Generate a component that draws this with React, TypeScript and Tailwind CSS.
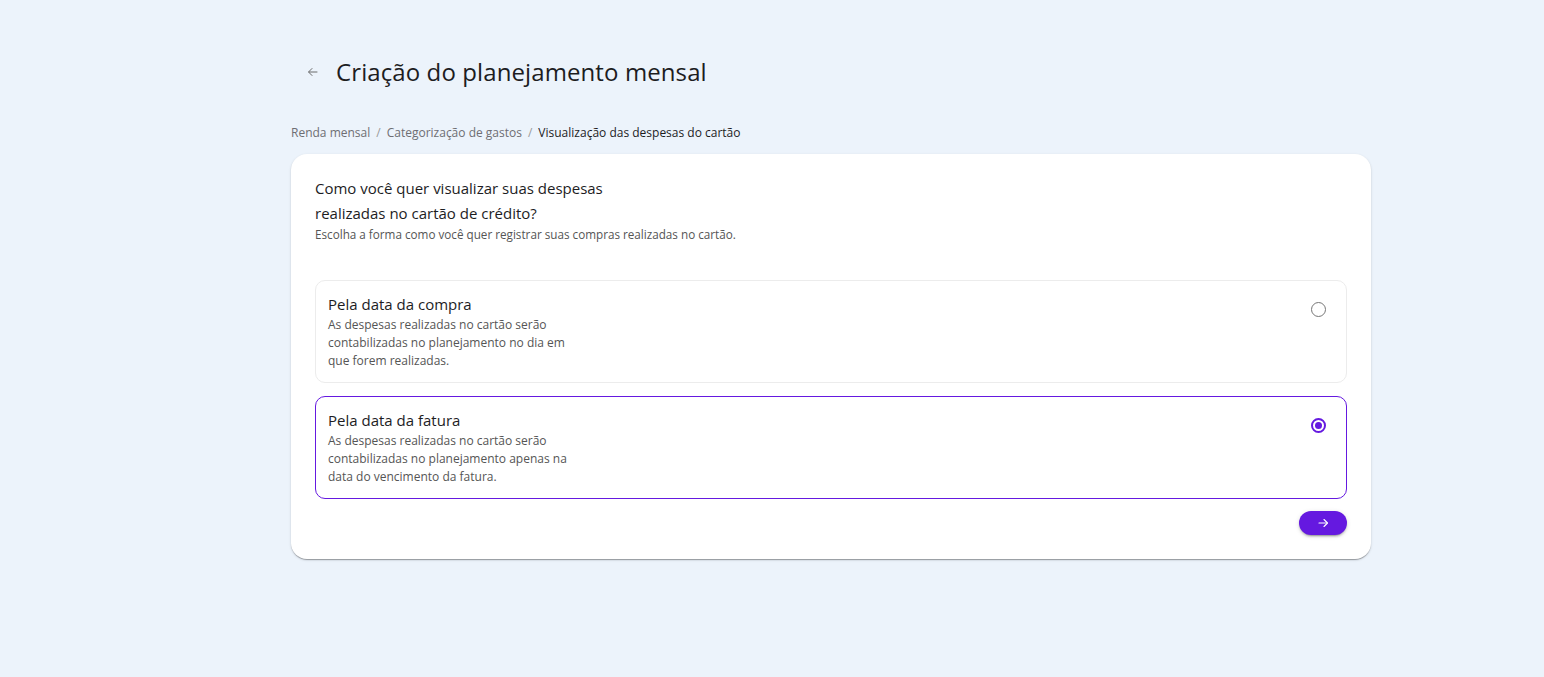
import React, { useState } from "react";

const opcoes = [
    {
        id: "compra",
        titulo: "Pela data da compra",
        descricao: "As despesas realizadas no cartão serão contabilizadas no planejamento no dia em que forem realizadas.",
    },
    {
        id: "fatura",
        titulo: "Pela data da fatura",
        descricao: "As despesas realizadas no cartão serão contabilizadas no planejamento apenas na data do vencimento da fatura.",
    },
];

const Radio = ({ checked }: { checked: boolean }) => (
    <span
        className={
            checked
                ? "shrink-0 w-[15px] h-[15px] rounded-full border-2 border-[#6519e0] flex items-center justify-center"
                : "block shrink-0 w-[15px] h-[15px] rounded-full border-[1.5px] border-[#767676]"
        }>
        {checked && <span className="block w-[7px] h-[7px] rounded-full bg-[#6519e0]"></span>}
    </span>
);

export default function App() {
    const [selecionado, setSelecionado] = useState("fatura");

    return (
        <div
            className="min-h-[677px] w-full bg-[#ecf3fb] text-[#1d1d1f]"
            style={{ fontFamily: '"Open Sans", "Noto Sans", sans-serif' }}>
            <main className="pl-[291px] pt-[56px] w-[1371px]">
                <header className="flex items-center h-[32px]">
                    <button className="w-[45px] flex items-center pl-[16px] text-[#6b6b6b]">
                        <svg width="12" height="12" viewBox="0 0 24 24" fill="none" stroke="currentColor" strokeWidth="2" strokeLinecap="round" strokeLinejoin="round">
                            <path d="M20 12H4" />
                            <path d="M10 5l-7 7 7 7" />
                        </svg>
                    </button>
                    <h1 className="text-[24px] tracking-[0.1px] leading-[32px]">Criação do planejamento mensal</h1>
                </header>

                <nav className="mt-[37px] flex items-center gap-[6px] text-[12px] leading-[16px] text-[#6e6e73]">
                    <span>Renda mensal</span>
                    <span className="text-[#9a9a9a]">/</span>
                    <span>Categorização de gastos</span>
                    <span className="text-[#9a9a9a]">/</span>
                    <span className="text-[#1d1d1f]">Visualização das despesas do cartão</span>
                </nav>

                <section className="mt-[13px] bg-white rounded-[16px] shadow-[0_2px_1px_-1px_rgba(0,0,0,0.2),0_1px_1px_0_rgba(0,0,0,0.14),0_1px_3px_0_rgba(0,0,0,0.12)] px-[24px] pt-[22px] pb-[24px]">
                    <h2 className="text-[15px] leading-[25px] w-[300px]">
                        Como você quer visualizar suas despesas realizadas no cartão de crédito?
                    </h2>
                    <p className="text-[11.7px] leading-[16px] text-[#555]">
                        Escolha a forma como você quer registrar suas compras realizadas no cartão.
                    </p>

                    <div className="mt-[38px] flex flex-col gap-[13px]">
                        {opcoes.map((opcao) => {
                            const ativo = selecionado === opcao.id;
                            return (
                                <label
                                    key={opcao.id}
                                    onClick={() => setSelecionado(opcao.id)}
                                    className={
                                        ativo
                                            ? "h-[103px] rounded-[10px] border border-[#6519e0] flex justify-between px-[12px] pt-[13px] cursor-pointer"
                                            : "h-[103px] rounded-[10px] border border-[#ececec] flex justify-between px-[12px] pt-[13px] cursor-pointer"
                                    }>
                                    <div>
                                        <h3 className="text-[15px] leading-[20px]">{opcao.titulo}</h3>
                                        <p className="mt-[2px] w-[240px] text-[12px] leading-[18px] text-[#555]">{opcao.descricao}</p>
                                    </div>
                                    <div className="pt-[8px] pr-[8px]">
                                        <Radio checked={ativo} />
                                    </div>
                                </label>
                            );
                        })}
                    </div>

                    <div className="mt-[12px] flex justify-end">
                        <button className="w-[48px] h-[24px] rounded-full bg-[#6519e0] text-white flex items-center justify-center shadow-[0_3px_1px_-2px_rgba(0,0,0,0.2),0_2px_2px_0_rgba(0,0,0,0.14),0_1px_5px_0_rgba(0,0,0,0.12)]">
                            <svg width="12" height="12" viewBox="0 0 24 24" fill="none" stroke="currentColor" strokeWidth="2.2" strokeLinecap="round" strokeLinejoin="round">
                                <path d="M4 12h16" />
                                <path d="M14 5l7 7-7 7" />
                            </svg>
                        </button>
                    </div>
                </section>
            </main>
        </div>
    );
}
